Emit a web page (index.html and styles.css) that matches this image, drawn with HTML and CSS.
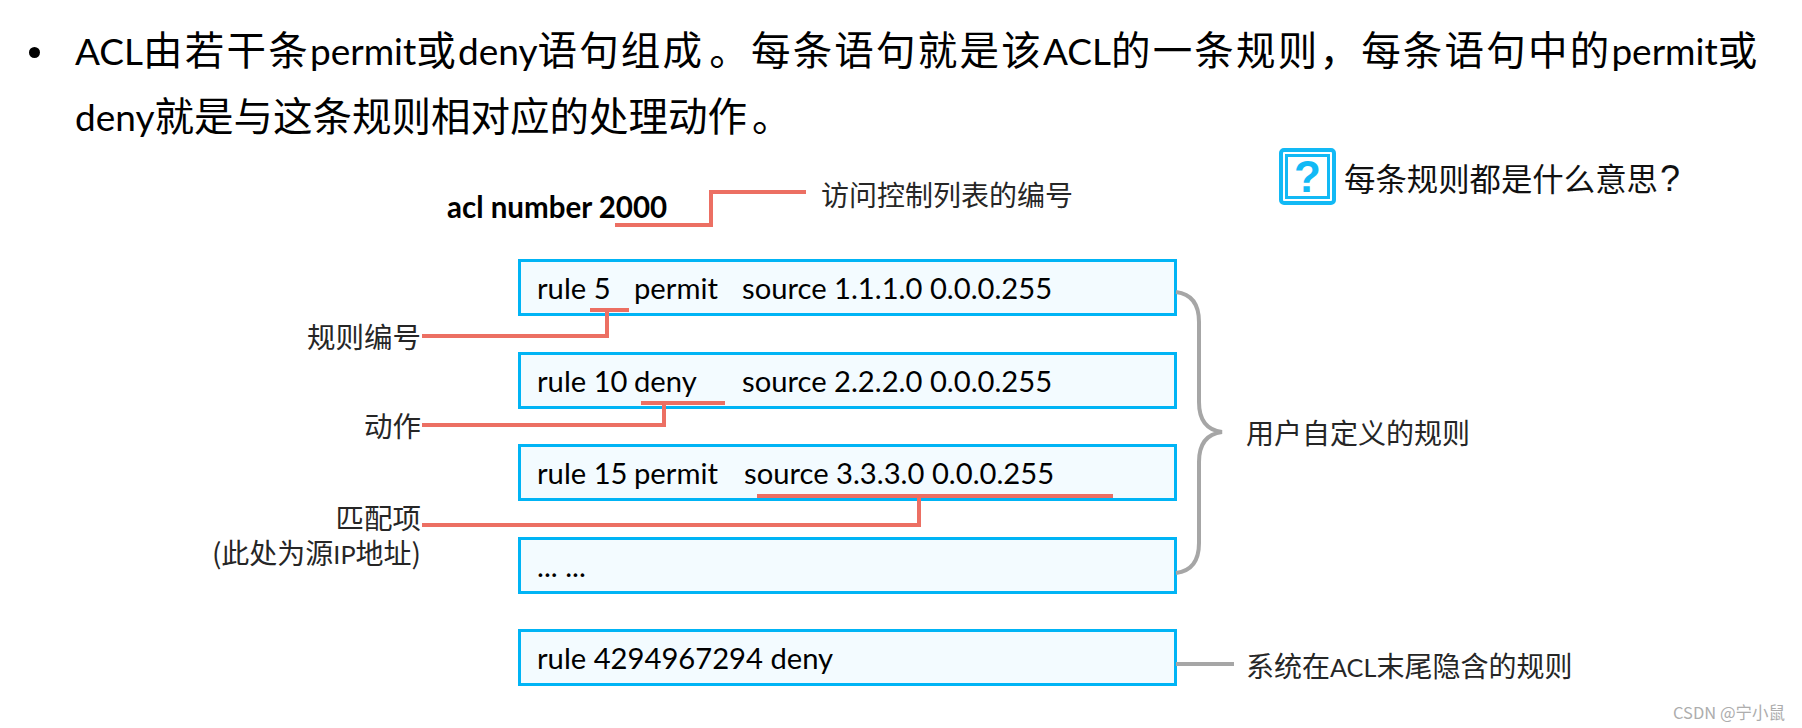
FILE: index.html
```html
<!DOCTYPE html>
<html lang="zh-CN">
<head>
<meta charset="utf-8">
<title>ACL</title>
<link rel="stylesheet" href="styles.css">
</head>
<body>
<main class="page">
  <ul class="intro">
    <li><span class="spread"><span class="lat">ACL</span>由若干条<span class="lat">permit</span>或<span class="lat">deny</span>语句组成<span class="stop">。</span>每条语句就是该<span class="lat">ACL</span>的一条规则，每条语句中的<span class="lat">permit</span>或</span><br><span class="lat">deny</span>就是与这条规则相对应的处理动作<span class="stop">。</span></li>
  </ul>
  <section class="diagram">
    <svg class="wires" width="1802" height="578" viewBox="0 150 1802 578" aria-hidden="true">
      <g class="red">
        <path d="M615 225H711V192H806"/>
        <path d="M590 310H629M607 310V336H422"/>
        <path d="M641 403H725M664 403V425H422"/>
        <path d="M757 496H1113M919 496V525H422"/>
      </g>
      <g class="grey">
        <path d="M1176 292C1192 294 1199 304 1199 322V402C1199 420 1206 430 1222 432C1206 434 1199 444 1199 462V543C1199 561 1192 571 1176 573"/>
        <path d="M1176 664H1234"/>
      </g>
    </svg>
    <ol class="rules">
      <li class="rule"><span class="c1">rule 5</span><span class="c2">permit</span><span>source 1.1.1.0 0.0.0.255</span></li>
      <li class="rule"><span class="c1">rule 10</span><span class="c2">deny</span><span>source 2.2.2.0 0.0.0.255</span></li>
      <li class="rule"><span class="c1">rule 15</span><span class="c2 c2w">permit</span><span>source 3.3.3.0 0.0.0.255</span></li>
      <li class="rule">... ...</li>
      <li class="rule last">rule 4294967294 deny</li>
    </ol>
    <strong class="acl">acl number 2000</strong>
    <span class="note n-acl">访问控制列表的编号</span>
    <div class="ask">
      <span class="qbox"><b>?</b></span>
      <span class="ask-text">每条规则都是什么意思<span class="ask-q">?</span></span>
    </div>
    <span class="note n-id">规则编号</span>
    <span class="note n-act">动作</span>
    <span class="note n-match">匹配项<br><small>(此处为源<span class="lat">IP</span>地址)</small></span>
    <span class="note n-user">用户自定义的规则</span>
    <span class="note n-sys">系统在<span class="lat">ACL</span>末尾隐含的规则</span>
    <span class="mark">CSDN @宁小鼠</span>
  </section>
</main>
</body>
</html>
```
FILE: styles.css
```css
html, body { margin: 0; padding: 0; background: #fff; }
body { font-family: "Noto Sans CJK SC", "Noto Sans", sans-serif; color: #000; }
.page { width: 1802px; height: 728px; overflow: hidden; }
.lat { font-family: "Lato", "Noto Sans CJK SC", sans-serif; font-size: 0.9em; line-height: 1; }
.intro { margin: 0; padding: 15px 0 0 75px; font-size: 39.5px; line-height: 66px; height: 135px; list-style: none; white-space: nowrap; }
.intro .lat { font-size: 37px; letter-spacing: 0; }
.spread { letter-spacing: 2.2px; }
.stop { margin-left: 5px; }
.intro li { position: relative; }
.intro li::before { content: ""; position: absolute; left: -46px; top: 32px; width: 11px; height: 11px; border-radius: 50%; background: #000; }
.diagram { position: relative; height: 578px; }
.wires { position: absolute; left: 0; top: 0; fill: none; z-index: 2; }
.red { stroke: #ec6f63; stroke-width: 4; }
.grey { stroke: #a6a6a6; stroke-width: 4; }
.rules { list-style: none; margin: 0; padding: 109px 0 0 518px; display: flex; flex-direction: column; gap: 35.5px; font-family: "Lato", sans-serif; font-size: 29.2px; }
.rule { box-sizing: border-box; width: 659px; height: 57px; border: 3px solid #00b4f5; background: #f3fbff; padding: 0 16px; display: flex; align-items: center; white-space: pre; }
.c1 { width: 97px; }
.c2 { width: 108px; }
.c2w { width: 110px; }
.acl { position: absolute; left: 447px; top: 39px; font-family: "Lato", sans-serif; font-size: 29.5px; line-height: 36px; font-weight: 700; white-space: nowrap; }
.note { position: absolute; font-size: 28px; line-height: 36px; color: #262626; white-space: nowrap; }
.n-acl { left: 821px; top: 26px; }
.n-id { right: 1381px; top: 168px; font-size: 28.5px; }
.n-act { right: 1381px; top: 257px; font-size: 28.5px; }
.n-match { right: 1381px; top: 349px; text-align: right; font-size: 28.5px; }
.n-match small { font-size: 28px; line-height: 34px; display: block; }
.n-user { left: 1246px; top: 264px; }
.n-sys { left: 1246px; top: 497px; }
.ask { position: absolute; left: 1279px; top: -2px; display: flex; align-items: center; gap: 8px; }
.qbox { box-sizing: border-box; width: 57px; height: 57px; border: 4px solid #12b9f5; border-radius: 5px; padding: 2px; background: #fff; display: flex; }
.qbox b { flex: 1; border: 3px solid #12b9f5; color: #12b9f5; font: 700 44px/39px "Liberation Sans", sans-serif; text-align: center; }
.ask-text { font-size: 31.4px; line-height: 44px; color: #111; white-space: nowrap; position: relative; top: 1px; }
.ask-q { font-family: "Liberation Sans", sans-serif; font-size: 36px; line-height: 1; margin-left: 2px; }
.mark { position: absolute; right: 17px; bottom: 7px; font-size: 16.5px; line-height: 18px; color: #adadad; white-space: nowrap; }
```
